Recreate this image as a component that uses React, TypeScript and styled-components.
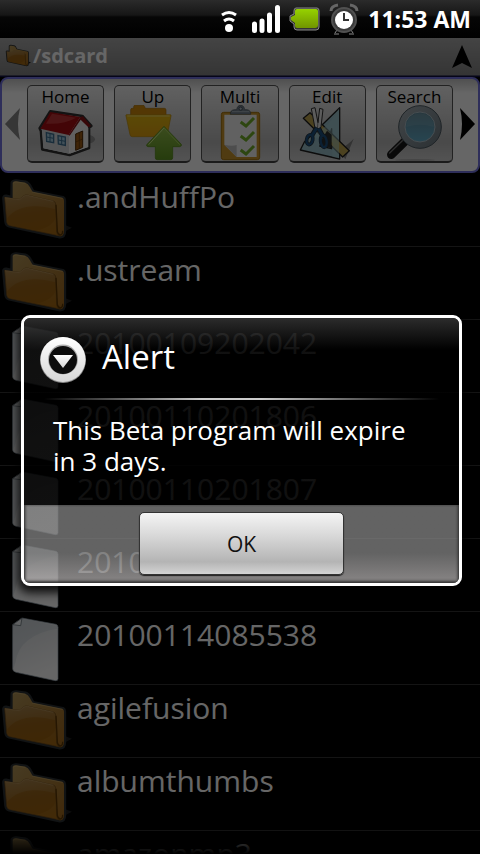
import React from 'react';
import styled, { createGlobalStyle } from 'styled-components';

const GlobalStyle = createGlobalStyle`
  *, *::before, *::after { box-sizing: border-box; }
  body { margin: 0; background: #000; }
  button { font: inherit; color: inherit; margin: 0; padding: 0; border: 0; background: none; cursor: pointer; }
  svg { display: block; flex: none; }
`;

const Screen = styled.div`
  height: 100vh;
  display: flex;
  flex-direction: column;
  overflow: hidden;
  background: #000;
  color: #fff;
  font-family: 'Open Sans', 'Noto Sans', sans-serif;
`;

const StatusBar = styled.header`
  flex: none;
  height: 38px;
  padding-right: 9px;
  display: flex;
  align-items: center;
  justify-content: flex-end;
  gap: 9px;
  background: linear-gradient(#2b2b2b 0, #161616 15px, #060606 17px, #000 100%);
`;

const Clock = styled.time`
  font-size: 23px;
  line-height: 30px;
  font-weight: 700;
`;

const Activity = styled.div`
  position: relative;
  flex: 1;
  min-height: 0;
  display: flex;
  flex-direction: column;
  overflow: hidden;
`;

const TitleBar = styled.div`
  flex: none;
  height: 39px;
  padding: 0 6px 4px 5px;
  display: flex;
  align-items: center;
  gap: 2px;
  background: linear-gradient(#aaa, #848484 37px, #101040 38px);
`;

const Path = styled.h1`
  flex: 1;
  margin: 0;
  font-size: 20px;
  line-height: 28px;
  font-weight: 700;
  color: #fff;
`;

const Toolbar = styled.nav`
  flex: none;
  height: 96px;
  display: flex;
  align-items: center;
  border: 2px solid #7474e0;
  border-radius: 8px;
  background: linear-gradient(#c8c8c8, #fff 14px);
  padding-bottom: 2px;
`;

const ToolList = styled.div`
  flex: 1;
  min-width: 0;
  display: flex;
  gap: 10px;
`;

const Arrow = styled.button`
  flex: none;
  width: 25px;
  height: 60px;
  display: flex;
  align-items: center;
  justify-content: center;
`;

const Tool = styled.button`
  flex: 1;
  min-width: 0;
  height: 78px;
  display: flex;
  flex-direction: column;
  align-items: center;
  overflow: hidden;
  border: 1px solid #555;
  border-bottom: 2px solid #444;
  border-radius: 5px;
  background: linear-gradient(#f2f2f2, #b8b8b8 75%, #d0d0d0);
  color: #000;
  font-size: 17px;
  line-height: 22px;

  svg { margin-top: -3px; }
`;

const FileList = styled.ul`
  flex: 1;
  min-height: 0;
  margin: 0;
  padding: 1px 0 0;
  overflow: hidden;
  list-style: none;
`;

const FileRow = styled.li`
  height: 73px;
  display: flex;
  gap: 5px;
  border-bottom: 1px solid #333;
`;

const FileName = styled.span`
  font-size: 30px;
  line-height: 46px;
`;

const BottomFade = styled.div`
  position: absolute;
  inset: auto 0 0 0;
  height: 26px;
  background: linear-gradient(transparent, #000);
`;

const Scrim = styled.div`
  position: absolute;
  inset: 0;
  padding: 9px 18px 0 21px;
  display: flex;
  align-items: center;
  background: rgba(0, 0, 0, 0.6);
`;

const Dialog = styled.section`
  flex: 1;
  overflow: hidden;
  border: 3px solid #fff;
  border-radius: 9px;
  box-shadow: 0 4px 10px 3px rgba(0, 0, 0, 0.85);
`;

const DialogBody = styled.div`
  min-height: 187px;
  background: linear-gradient(rgba(52, 52, 52, 0.84), rgba(0, 0, 0, 0.84) 32px);
`;

const DialogTitle = styled.div`
  height: 80px;
  padding: 3px 16px 0;
  display: flex;
  align-items: center;
  gap: 16px;

  h2 {
    margin: 0 0 6px;
    font-size: 33px;
    line-height: 44px;
    font-weight: 400;
  }
`;

const Rule = styled.hr`
  height: 2px;
  margin: 0 20px;
  border: 0;
  background: linear-gradient(90deg, transparent, #ccc 40%, #ccc 55%, transparent);
`;

const Message = styled.p`
  margin: 0;
  padding: 15px 40px 27px 29px;
  font-size: 26px;
  line-height: 31px;
`;

const DialogActions = styled.div`
  height: 78px;
  display: flex;
  justify-content: center;
  align-items: flex-start;
  padding-top: 7px;
  background: linear-gradient(rgba(141, 141, 141, 0.7) 48px, rgba(190, 186, 186, 0.72));
  box-shadow: inset 0 -2px 3px #333, inset 2px 0 3px -1px #333, inset -2px 0 3px -1px #333;
`;

const OkButton = styled.button`
  width: 47%;
  height: 63px;
  border: 1px solid #333;
  border-radius: 5px;
  background: linear-gradient(#f4f4f4, #dadada 35%, #b4b4b4 80%, #d4d4d4);
  box-shadow: 0 1px 1px #222;
  color: #111;
  font-size: 21px;
`;

const FolderIcon = ({ size }: { size: number }) => (
  <svg width={size} height={size} viewBox="0 12 216 216" aria-hidden="true">
    <defs>
      <linearGradient id="folderBack" x1="0" y1="0" x2="1" y2="1">
        <stop offset="0" stopColor="#b09458" />
        <stop offset="1" stopColor="#a0661a" />
      </linearGradient>
      <linearGradient id="folderFront" x1="0" y1="0" x2="0.2" y2="1">
        <stop offset="0" stopColor="#a88550" />
        <stop offset="0.55" stopColor="#9c6a24" />
        <stop offset="1" stopColor="#a56a14" />
      </linearGradient>
    </defs>
    <path d="M184 190l32-17-22-8z" fill="#202020" />
    <path
      d="M38 38Q40 34 48 34L76 38Q84 40 90 52L98 66L188 84Q192 86 192 92V184Q192 199 180 199L28 166Q20 164 19 154L13 86Q12 80 18 80L37 84Z"
      fill="#272727" stroke="#2c3032" strokeWidth="13" strokeLinejoin="round"
    />
    <path d="M38 38Q40 34 48 34L76 38Q84 40 90 52L98 66L188 84Q192 86 192 92V184Q192 199 180 199L38 160Z" fill="url(#folderBack)" />
    <path d="M96 66L188 85M40 40Q44 35 50 36L76 40" fill="none" stroke="#c9ab6c" strokeWidth="2" />
    <path
      d="M14 82L58 88L72 77Q76 74 82 75L160 93Q167 95 167 102L170 188Q172 196 181 198L30 167Q21 165 20 156Z"
      fill="url(#folderFront)" stroke="#6f4a16" strokeWidth="2"
    />
    <path d="M22 144Q66 91 165 118L168 140Q160 170 110 181L30 165Q22 163 22 144Z" fill="#96590a" opacity="0.5" />
    <path d="M15 83L58 89L72 78Q76 75 82 76L160 94" fill="none" stroke="#c4a26a" strokeWidth="2" />
    <path d="M168 104L172 184Q174 194 181 195Q188 194 188 182" fill="none" stroke="#5d3905" strokeWidth="4" />
  </svg>
);

const DocumentIcon = () => (
  <svg width="72" height="72" viewBox="0 36 216 216" aria-hidden="true">
    <defs>
      <linearGradient id="paper" x1="0" y1="0" x2="0.3" y2="1">
        <stop offset="0" stopColor="#d8dde0" />
        <stop offset="0.5" stopColor="#eaecee" />
        <stop offset="1" stopColor="#fff" />
      </linearGradient>
    </defs>
    <path
      d="M66 54L168 73Q174 75 174 82V236Q174 243 166 242L48 217Q38 214 38 206V74Z"
      fill="url(#paper)" stroke="#8f9eaa" strokeWidth="2"
    />
    <path d="M46 188Q58 104 172 86L172 78L66 56L62 77L40 77V206Z" fill="#b7c4ca" opacity="0.35" />
    <path d="M66 54L38 74L62 77Z" fill="#eef1f2" stroke="#4e5a62" strokeWidth="2" />
  </svg>
);

const HomeIcon = () => (
  <svg width="76" height="57" viewBox="81 207 228 171" aria-hidden="true">
    <ellipse cx="244" cy="310" rx="38" ry="16" fill="#666" opacity="0.5" />
    <path
      d="M148 226L244 240L271 270L264 274V336L206 357L124 340L120 286L116 277Z"
      fill="#fff" stroke="#303030" strokeWidth="8" strokeLinejoin="round"
    />
    <path d="M122 276L204 292V353L127 337Z" fill="#d4d8da" />
    <path d="M204 292L239 246L262 276V333L206 353Z" fill="#efefef" />
    <path d="M148 228L238 243L203 297L118 278Z" fill="#a80d12" />
    <path d="M238 243L246 241L270 270L262 274L239 251L206 299L203 297Z" fill="#8a1216" />
    <path d="M153 233L225 245Q191 266 135 263Z" fill="#d65a55" opacity="0.55" />
    <path d="M224 294L245 285V334L224 343Z" fill="#9b5a14" stroke="#4d2a06" strokeWidth="3" />
    <path d="M235 290V338M224 318L245 309" stroke="#5b3309" strokeWidth="2" />
    <path d="M136 290L158 295V320L137 316ZM171 299L193 303V328L172 324Z" fill="#a2c8dc" stroke="#3d6f91" strokeWidth="4" />
    <path d="M147 293V318M137 303L158 307M182 301V326M172 312L193 316" stroke="#3d6f91" strokeWidth="3" />
  </svg>
);

const UpIcon = () => (
  <svg width="76" height="57" viewBox="342 207 228 171" aria-hidden="true">
    <defs>
      <linearGradient id="upFolder" x1="0" y1="0" x2="0" y2="1">
        <stop offset="0" stopColor="#e3b810" />
        <stop offset="1" stopColor="#e0a010" />
      </linearGradient>
      <linearGradient id="upArrow" x1="0" y1="0" x2="0" y2="1">
        <stop offset="0" stopColor="#94bf4c" />
        <stop offset="1" stopColor="#5f9622" />
      </linearGradient>
    </defs>
    <path d="M389 238V221Q389 217 394 217H398V212Q398 208 403 208H426Q430 208 431 212L433 217H490Q495 217 495 222V238Z" fill="#d08a0c" stroke="#a8700a" strokeWidth="2" />
    <path d="M376 236H508Q511 236 510 240L499 296Q498 302 492 302H394Q388 302 387 296L375 240Q374 236 376 236Z" fill="url(#upFolder)" stroke="#b98a0c" strokeWidth="2" />
    <path d="M379 240H506" stroke="#ecd56a" strokeWidth="3" />
    <path d="M489 271L541 325Q543 331 536 332H515V366Q515 371 509 371H469Q463 371 463 366V332H441Q434 331 438 325Z" fill="url(#upArrow)" stroke="#4f8710" strokeWidth="2" />
    <path d="M489 276L443 326" stroke="#cdea8b" strokeWidth="3" />
    <path d="M489 276L536 326" stroke="#b8df70" strokeWidth="2" />
  </svg>
);

const MultiIcon = () => (
  <svg width="76" height="57" viewBox="33 87 228 171" aria-hidden="true">
    <rect x="91" y="109" width="115" height="142" rx="7" fill="#c8952c" stroke="#a3720e" strokeWidth="3" />
    <path d="M100 116H197V243H137L100 206Z" fill="#f2f2f2" />
    <path d="M100 206Q122 212 137 207V243Z" fill="#c0c0c0" />
    <path d="M118 115Q117 103 130 101H137Q139 88 149 88Q159 88 161 101H168Q180 103 179 115Z" fill="#75828f" stroke="#46515b" strokeWidth="2" />
    <circle cx="149" cy="98" r="5" fill="#aeb9c2" stroke="#46515b" strokeWidth="3" />
    <path d="M123 107H175" stroke="#bac5cd" strokeWidth="2" />
    <path d="M149 138L165 150L189 126M149 180L165 192L189 168M149 222L165 234L189 210" fill="none" stroke="#71ae28" strokeWidth="9" />
  </svg>
);

const EditIcon = () => (
  <svg width="76" height="57" viewBox="294 87 228 171" aria-hidden="true">
    <path d="M444 222Q474 204 488 188L463 250Z" fill="#555" opacity="0.6" />
    <path
      d="M446 95V249L328 222L340 198Q386 154 446 95ZM422 158Q417 190 386 210L422 218Z"
      fill="#98bfc8" fillRule="evenodd" stroke="#202020" strokeWidth="4" strokeLinejoin="round"
    />
    <path d="M337 127L357 110L475 224L455 243Z" fill="#bfa650" stroke="#202020" strokeWidth="4" strokeLinejoin="round" />
    <path d="M366 176Q400 158 422 132L444 98V247L424 242V200L400 178L366 190Z" fill="#a4ccd0" opacity="0.55" />
    <path d="M386 202L408 164L422 176V218Z" fill="#2c3030" />
    <path d="M361 98L372 95L381 140L386 97L396 100L390 152L383 168L373 162Z" fill="#e6e6e6" stroke="#303030" strokeWidth="3" strokeLinejoin="round" />
    <path d="M381 136L379 160" stroke="#555" strokeWidth="2" />
    <path d="M377 154L362 180M383 156L396 182" stroke="#25303a" strokeWidth="14" />
    <ellipse cx="356" cy="191" rx="9" ry="15" fill="none" stroke="#25303a" strokeWidth="11" transform="rotate(12 356 191)" />
    <ellipse cx="398" cy="196" rx="9" ry="18" fill="none" stroke="#25303a" strokeWidth="11" transform="rotate(-8 398 196)" />
    <path d="M377 156L362 180M383 158L396 182" stroke="#1d527f" strokeWidth="9" />
    <ellipse cx="356" cy="191" rx="9" ry="15" fill="none" stroke="#1d527f" strokeWidth="7" transform="rotate(12 356 191)" />
    <ellipse cx="398" cy="196" rx="9" ry="18" fill="none" stroke="#1d527f" strokeWidth="7" transform="rotate(-8 398 196)" />
  </svg>
);

const SearchIcon = () => (
  <svg width="76" height="57" viewBox="555 87 228 171" aria-hidden="true">
    <defs>
      <linearGradient id="lens" x1="0" y1="0" x2="0" y2="1">
        <stop offset="0" stopColor="#5c8494" />
        <stop offset="1" stopColor="#64aecb" />
      </linearGradient>
      <linearGradient id="lensRim" x1="0" y1="0" x2="1" y2="1">
        <stop offset="0" stopColor="#a5afb5" />
        <stop offset="1" stopColor="#6c7981" />
      </linearGradient>
    </defs>
    <ellipse cx="672" cy="252" rx="60" ry="3" fill="#999" opacity="0.6" />
    <path d="M644 194L601 236" stroke="#181818" strokeWidth="26" strokeLinecap="round" />
    <path d="M634 194L596 231" stroke="#757575" strokeWidth="4" strokeLinecap="round" />
    <circle cx="687" cy="153" r="64" fill="url(#lensRim)" stroke="#4c5961" strokeWidth="3" />
    <circle cx="687" cy="153" r="45" fill="url(#lens)" stroke="#b0c0c8" strokeWidth="3" />
    <path d="M646 153A41 41 0 0 1 728 153Q687 140 646 153Z" fill="#8fb6c5" opacity="0.3" />
  </svg>
);

const WifiIcon = () => (
  <svg width="24" height="26" viewBox="0 0 24 26" aria-label="Wi-Fi">
    <circle cx="10" cy="22" r="4" fill="#fff" />
    <path d="M3 9Q10 4 17 9M5 15Q10 11 15 15" fill="none" stroke="#fff" strokeWidth="3" />
  </svg>
);

const SignalIcon = () => (
  <svg width="28" height="28" viewBox="0 0 28 28" aria-label="Signal">
    <path d="M2.500 19V25.500M10 16V25.500M17.500 10V25.500M25.500 2.500V25.500" stroke="#fff" strokeWidth="5" strokeLinecap="round" />
  </svg>
);

const BatteryIcon = () => (
  <svg width="31" height="24" viewBox="0 0 31 24" aria-label="Battery full">
    <defs>
      <linearGradient id="charge" x1="0" y1="0" x2="0" y2="1">
        <stop offset="0" stopColor="#96d200" />
        <stop offset="1" stopColor="#719500" />
      </linearGradient>
    </defs>
    <path d="M7 1H28Q30 1 30 4V20Q30 23 27 23H8Q5 23 5 20V17L1 14V9L5 7V4Q5 1 7 1Z" fill="#333" stroke="#888" />
    <path d="M8 2H27Q29 2 29 4V18Q29 21 26 21H8Q6 21 6 19V16L2 13V10L6 8V4Q6 2 8 2Z" fill="url(#charge)" />
  </svg>
);

const AlarmIcon = () => (
  <svg width="30" height="32" viewBox="0 0 30 32" aria-label="Alarm set">
    <path d="M2 8Q2 3 9 2M28 8Q28 3 21 2" fill="none" stroke="#666" strokeWidth="3" />
    <path d="M5 31H10M20 31H25M8 27L6 30M22 27L24 30" stroke="#888" />
    <circle cx="15" cy="17" r="12" fill="#3a3a3a" stroke="#505050" strokeWidth="2" />
    <circle cx="15" cy="17" r="9" fill="#fff" />
    <path d="M15 10V17H20" fill="none" stroke="#333" strokeWidth="2" />
  </svg>
);

const AlertIcon = () => (
  <svg width="46" height="46" viewBox="0 0 46 46" aria-hidden="true">
    <defs>
      <linearGradient id="ring" x1="0" y1="0" x2="0" y2="1">
        <stop offset="0" stopColor="#fff" />
        <stop offset="1" stopColor="#d6d6d6" />
      </linearGradient>
    </defs>
    <circle cx="23" cy="23" r="23" fill="#888" />
    <circle cx="23" cy="22.500" r="22.500" fill="url(#ring)" />
    <circle cx="23" cy="22.500" r="15" fill="#aaa" />
    <circle cx="23" cy="23" r="14" fill="#0c0c0c" />
    <path d="M13 18H33L23 31Z" fill="url(#ring)" />
  </svg>
);

const tools = [
  { label: 'Home', Icon: HomeIcon },
  { label: 'Up', Icon: UpIcon },
  { label: 'Multi', Icon: MultiIcon },
  { label: 'Edit', Icon: EditIcon },
  { label: 'Search', Icon: SearchIcon },
];

const files = [
  { name: '.andHuffPo', folder: true },
  { name: '.ustream', folder: true },
  { name: '20100109202042', folder: false },
  { name: '20100110201806', folder: false },
  { name: '20100110201807', folder: false },
  { name: '20100114085537', folder: false },
  { name: '20100114085538', folder: false },
  { name: 'agilefusion', folder: true },
  { name: 'albumthumbs', folder: true },
  { name: 'amazonmp3', folder: true },
];

export default function App() {
  return (
    <Screen>
      <GlobalStyle />
      <StatusBar>
        <WifiIcon />
        <SignalIcon />
        <BatteryIcon />
        <AlarmIcon />
        <Clock>11:53 AM</Clock>
      </StatusBar>
      <Activity>
        <TitleBar>
          <FolderIcon size={26} />
          <Path>/sdcard</Path>
          <svg width="24" height="26" viewBox="0 0 24 26" aria-hidden="true">
            <path d="M12 2L22 25L12 20L2 25Z" fill="#000" />
          </svg>
        </TitleBar>
        <Toolbar aria-label="File actions">
          <Arrow aria-label="Previous tools">
            <svg width="21" height="32" viewBox="0 0 21 32"><path d="M16 0Q12 16 16 32L1 16Z" fill="#888" /></svg>
          </Arrow>
          <ToolList>
            {tools.map(({ label, Icon }) => (
              <Tool key={label}>
                {label}
                <Icon />
              </Tool>
            ))}
          </ToolList>
          <Arrow aria-label="More tools">
            <svg width="21" height="32" viewBox="0 0 21 32"><path d="M5 0Q9 16 5 32L20 16Z" fill="#000" /></svg>
          </Arrow>
        </Toolbar>
        <FileList>
          {files.map(({ name, folder }) => (
            <FileRow key={name}>
              {folder ? <FolderIcon size={72} /> : <DocumentIcon />}
              <FileName>{name}</FileName>
            </FileRow>
          ))}
        </FileList>
        <BottomFade />
        <Scrim>
          <Dialog role="alertdialog" aria-modal="true" aria-labelledby="alert-title" aria-describedby="alert-message">
            <DialogBody>
              <DialogTitle>
                <AlertIcon />
                <h2 id="alert-title">Alert</h2>
              </DialogTitle>
              <Rule />
              <Message id="alert-message">This Beta program will expire in 3 days.</Message>
            </DialogBody>
            <DialogActions>
              <OkButton>OK</OkButton>
            </DialogActions>
          </Dialog>
        </Scrim>
      </Activity>
    </Screen>
  );
}
